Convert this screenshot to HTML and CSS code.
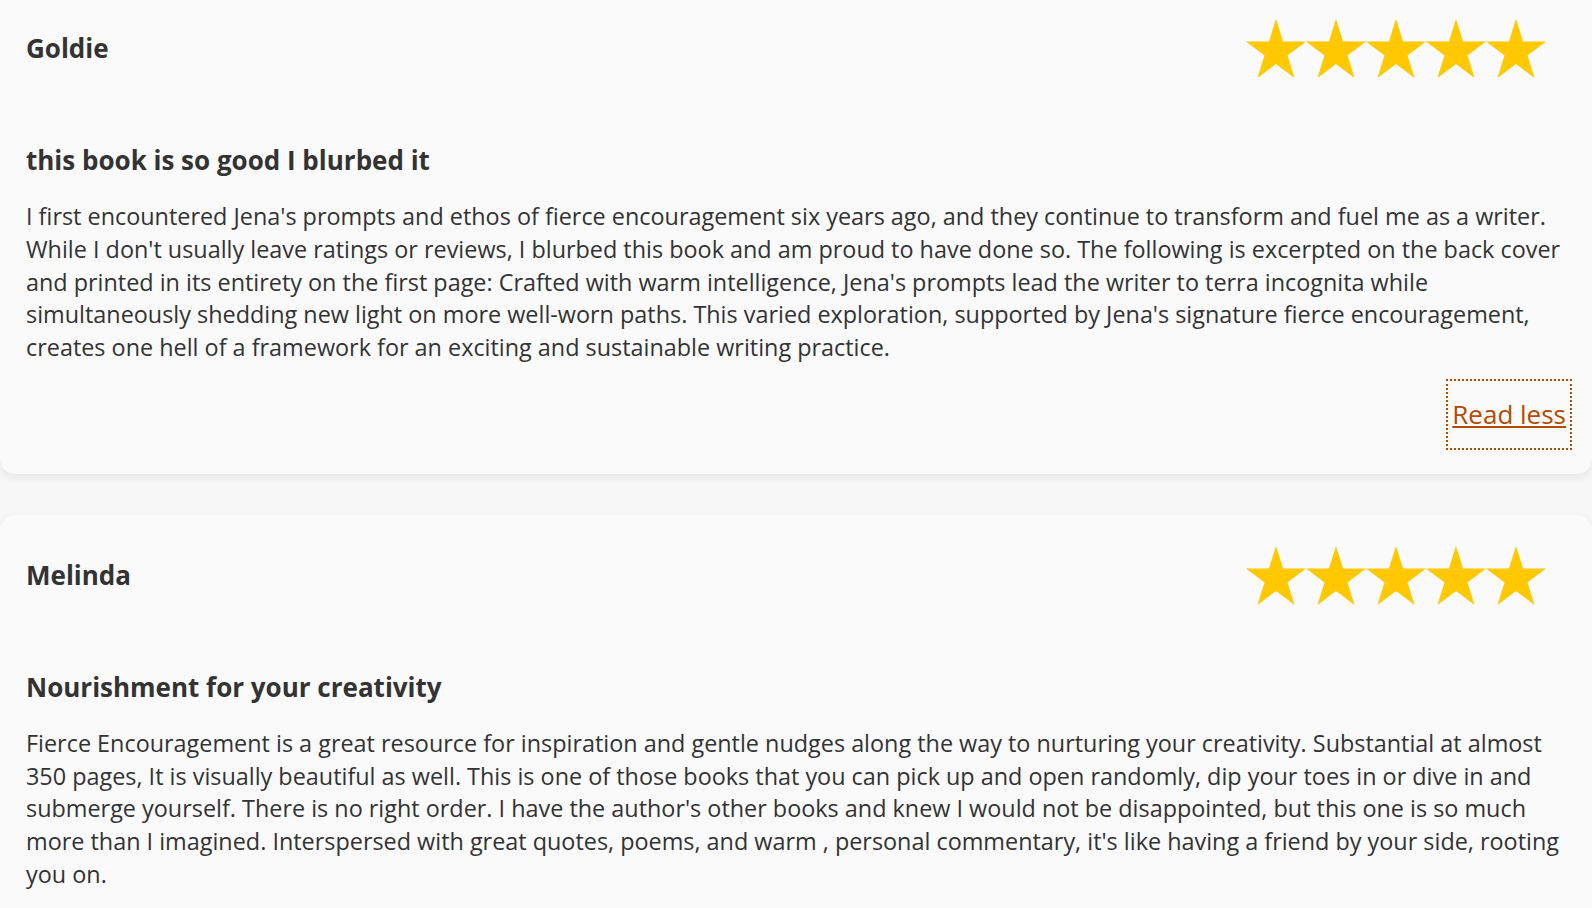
FILE: index.html
```html
<!DOCTYPE html>
<html lang="en">

<head>
  <meta charset="UTF-8" />
  <meta name="viewport" content="width=device-width, initial-scale=1.0" />
  <title>Reviews</title>
  <link rel="stylesheet" href="styles.css">
</head>

<body>
  <main class="reviews">
    <article class="review">
      <div class="review-head">
        <h3 class="reviewer">Goldie</h3>
        <div class="stars" aria-label="5 out of 5 stars">
          <svg class="star" viewBox="-47.55 -50 95.1 90.45" preserveAspectRatio="none"><polygon points="0,-50 11.2,-15.45 47.55,-15.45 18.2,5.9 29.4,40.45 0,19.1 -29.4,40.45 -18.2,5.9 -47.55,-15.45 -11.2,-15.45" /></svg>
          <svg class="star" viewBox="-47.55 -50 95.1 90.45" preserveAspectRatio="none"><polygon points="0,-50 11.2,-15.45 47.55,-15.45 18.2,5.9 29.4,40.45 0,19.1 -29.4,40.45 -18.2,5.9 -47.55,-15.45 -11.2,-15.45" /></svg>
          <svg class="star" viewBox="-47.55 -50 95.1 90.45" preserveAspectRatio="none"><polygon points="0,-50 11.2,-15.45 47.55,-15.45 18.2,5.9 29.4,40.45 0,19.1 -29.4,40.45 -18.2,5.9 -47.55,-15.45 -11.2,-15.45" /></svg>
          <svg class="star" viewBox="-47.55 -50 95.1 90.45" preserveAspectRatio="none"><polygon points="0,-50 11.2,-15.45 47.55,-15.45 18.2,5.9 29.4,40.45 0,19.1 -29.4,40.45 -18.2,5.9 -47.55,-15.45 -11.2,-15.45" /></svg>
          <svg class="star" viewBox="-47.55 -50 95.1 90.45" preserveAspectRatio="none"><polygon points="0,-50 11.2,-15.45 47.55,-15.45 18.2,5.9 29.4,40.45 0,19.1 -29.4,40.45 -18.2,5.9 -47.55,-15.45 -11.2,-15.45" /></svg>
        </div>
      </div>
      <h4 class="review-title">this book is so good I blurbed it</h4>
      <p class="review-body">I first encountered Jena's prompts and ethos of fierce encouragement six years ago, and they continue to transform and fuel me as a writer. While I don't usually leave ratings or reviews, I blurbed this book and am proud to have done so. The following is excerpted on the back cover and printed in its entirety on the first page: Crafted with warm intelligence, Jena's prompts lead the writer to terra incognita while simultaneously shedding new light on more well-worn paths. This varied exploration, supported by Jena's signature fierce encouragement, creates one hell of a framework for an exciting and sustainable writing practice.</p>
      <div class="review-foot">
        <a href="#" class="read-toggle">Read less</a>
      </div>
    </article>

    <article class="review">
      <div class="review-head">
        <h3 class="reviewer">Melinda</h3>
        <div class="stars" aria-label="5 out of 5 stars">
          <svg class="star" viewBox="-47.55 -50 95.1 90.45" preserveAspectRatio="none"><polygon points="0,-50 11.2,-15.45 47.55,-15.45 18.2,5.9 29.4,40.45 0,19.1 -29.4,40.45 -18.2,5.9 -47.55,-15.45 -11.2,-15.45" /></svg>
          <svg class="star" viewBox="-47.55 -50 95.1 90.45" preserveAspectRatio="none"><polygon points="0,-50 11.2,-15.45 47.55,-15.45 18.2,5.9 29.4,40.45 0,19.1 -29.4,40.45 -18.2,5.9 -47.55,-15.45 -11.2,-15.45" /></svg>
          <svg class="star" viewBox="-47.55 -50 95.1 90.45" preserveAspectRatio="none"><polygon points="0,-50 11.2,-15.45 47.55,-15.45 18.2,5.9 29.4,40.45 0,19.1 -29.4,40.45 -18.2,5.9 -47.55,-15.45 -11.2,-15.45" /></svg>
          <svg class="star" viewBox="-47.55 -50 95.1 90.45" preserveAspectRatio="none"><polygon points="0,-50 11.2,-15.45 47.55,-15.45 18.2,5.9 29.4,40.45 0,19.1 -29.4,40.45 -18.2,5.9 -47.55,-15.45 -11.2,-15.45" /></svg>
          <svg class="star" viewBox="-47.55 -50 95.1 90.45" preserveAspectRatio="none"><polygon points="0,-50 11.2,-15.45 47.55,-15.45 18.2,5.9 29.4,40.45 0,19.1 -29.4,40.45 -18.2,5.9 -47.55,-15.45 -11.2,-15.45" /></svg>
        </div>
      </div>
      <h4 class="review-title">Nourishment for your creativity</h4>
      <p class="review-body">Fierce Encouragement is a great resource for inspiration and gentle nudges along the way to nurturing your creativity. Substantial at almost 350 pages, It is visually beautiful as well. This is one of those books that you can pick up and open randomly, dip your toes in or dive in and submerge yourself. There is no right order. I have the author's other books and knew I would not be disappointed, but this one is so much more than I imagined. Interspersed with great quotes, poems, and warm , personal commentary, it's like having a friend by your side, rooting you on.</p>
    </article>
  </main>
</body>

</html>
```

FILE: styles.css
```css
:root {
  --text-color: #333333;
  --page-bg: #f7f7f7;
  --card-bg: #fafafa;
  --star-color: #ffc800;
  --link-color: #b34c00;
}

* {
  margin: 0;
  padding: 0;
  box-sizing: border-box;
}

body {
  background-color: var(--page-bg);
  color: var(--text-color);
  font-family: "Open Sans", "Liberation Sans", sans-serif;
  overflow: hidden;
}

/* the list is scrolled a little, so the first card starts above the window */
.reviews {
  display: flex;
  flex-direction: column;
  gap: 41px;
  margin-top: -12px;
}

.review {
  background: var(--card-bg);
  border-radius: 15px;
  box-shadow: 0 3px 8px rgba(0, 0, 0, 0.08);
  padding: 31px 26px 30px;
}

.review-head {
  display: flex;
  justify-content: space-between;
  align-items: center;
}

.reviewer {
  font-size: 26px;
  font-weight: 700;
  line-height: 1.5;
}

.stars {
  display: flex;
  margin-right: 20px;
}

.star {
  width: 60px;
  height: 59px;
  fill: var(--star-color);
}

.review-title {
  font-size: 26px;
  font-weight: 700;
  line-height: 1.5;
  margin-top: 63px;
}

.review-body {
  font-size: 23.4px;
  line-height: 1.4;
  margin-top: 20px;
}

.review-foot {
  text-align: right;
  margin-top: 21px;
}

.read-toggle {
  display: inline-block;
  padding: 10px 0;
  font-size: 26px;
  line-height: 39px;
  color: var(--link-color);
  outline: 2px dotted var(--link-color);
  outline-offset: 4px;
}
```
